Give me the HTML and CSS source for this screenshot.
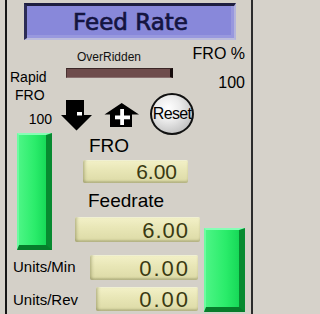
FILE: index.html
```html
<!DOCTYPE html>
<html>
<head>
<meta charset="utf-8">
<link rel="stylesheet" href="styles.css">
</head>
<body>
<div class="panel">
  <div class="title">Feed Rate</div>
  <div class="main">
    <div class="leftmain">
      <div class="upper">
        <div class="leftcol">
          <div class="lbl rapid">Rapid</div>
          <div class="lbl rapid-fro">FRO</div>
          <div class="lbl rapid-val">100</div>
          <div class="gbar gbar-left"></div>
        </div>
        <div class="midcol">
          <div class="overridden">OverRidden</div>
          <div class="ovbar"></div>
          <div class="icons">
            <svg class="ico-down" width="31" height="31" viewBox="0 0 31 31">
              <path d="M5 0 H23 V15 H31 L15.5 30.5 L0 15 H5 Z" fill="#000"/>
              <rect x="16" y="12" width="5" height="3.5" fill="#fff"/>
            </svg>
            <svg class="ico-up" width="36" height="26" viewBox="0 0 36 26">
              <path d="M17.7 1 L35 12.5 H28 V25 H6 V12.5 H0.5 Z" fill="#000"/>
              <rect x="16.2" y="7" width="3.8" height="16" fill="#fff"/>
              <rect x="11" y="13.5" width="15" height="3.8" fill="#fff"/>
            </svg>
            <div class="reset">Reset</div>
          </div>
          <div class="lbl big fro">FRO</div>
          <div class="field f1">6.00</div>
          <div class="lbl big feedrate">Feedrate</div>
          <div class="field f2">6.00</div>
        </div>
      </div>
      <div class="row row-min">
        <div class="lbl units">Units/Min</div>
        <div class="field f3">0.00</div>
      </div>
      <div class="row row-rev">
        <div class="lbl units units-rev">Units/Rev</div>
        <div class="field f4">0.00</div>
      </div>
    </div>
    <div class="rightcol">
      <div class="lbl fropct">FRO %</div>
      <div class="lbl fropct-val">100</div>
      <div class="gbar gbar-right"></div>
    </div>
  </div>
</div>
</body>
</html>
```
FILE: styles.css
```css
html, body {
  margin: 0;
  padding: 0;
  background: #d6d2ca;
  font-family: "Liberation Sans", Arial, sans-serif;
}
.panel {
  margin-left: 5px;
  width: 248px;
  height: 314px;
  box-sizing: border-box;
  border-left: 2px solid #161616;
  border-right: 2px solid #2c2c2c;
  background: #d4d0c8;
  overflow: hidden;
}
.title {
  margin: 3px 0 0 17px;
  width: 212px;
  height: 37px;
  box-sizing: border-box;
  background: #8888da;
  border-top: 3px solid #1e1e40;
  border-left: 3px solid #2c2c56;
  border-right: 2px solid #b4b4dc;
  border-bottom: 2px solid #bcbcdc;
  box-shadow: inset -3px -3px 0 #9898de;
  font-family: "DejaVu Sans", sans-serif;
  font-size: 23px;
  line-height: 32px;
  text-align: center;
  color: #141440;
  -webkit-text-stroke: 0.7px #141440;
}
.main {
  display: flex;
  height: 274px;
}
.leftmain {
  width: 193px;
  display: flex;
  flex-direction: column;
}
.upper {
  display: flex;
  height: 210px;
}
.leftcol {
  width: 51px;
  box-sizing: border-box;
  padding-left: 3px;
  padding-right: 6px;
  display: flex;
  flex-direction: column;
}
.lbl {
  color: #000;
  white-space: nowrap;
}
.rapid {
  font-size: 14px;
  line-height: 16px;
  margin-top: 29px;
}
.rapid-fro {
  font-size: 14px;
  line-height: 16px;
  margin-top: 2px;
  margin-left: 5px;
}
.rapid-val {
  font-size: 14px;
  line-height: 16px;
  margin-top: 8px;
  text-align: right;
}
.gbar {
  box-sizing: border-box;
  background: linear-gradient(to right, #4cf585 0%, #2aec6a 60%, #17d958 100%);
  border-top: 2px solid #86ffb6;
  border-left: 2px solid #6cfca0;
  border-right: 6px solid #078a30;
  border-bottom: 5px solid #067d2b;
}
.gbar-left {
  margin-top: 6px;
  margin-left: 7px;
  width: 35px;
  height: 117px;
}
.midcol {
  width: 142px;
  display: flex;
  flex-direction: column;
}
.overridden {
  font-size: 12px;
  line-height: 14px;
  margin-top: 10px;
  margin-left: 19px;
  color: #111;
}
.ovbar {
  margin-top: 4px;
  margin-left: 8px;
  width: 107px;
  height: 10px;
  box-sizing: border-box;
  background: #6e4c4c;
  border-top: 1px solid #3a2626;
  border-left: 1px solid #4a3232;
  border-bottom: 1px solid #8a7070;
  border-right: 3px solid #160c0c;
}
.icons {
  margin-top: 15px;
  height: 42px;
  display: flex;
  align-items: flex-start;
}
.ico-down {
  margin-top: 7px;
  margin-left: 3px;
}
.ico-up {
  margin-top: 9px;
  margin-left: 12px;
}
.reset {
  margin-left: 10px;
  width: 44px;
  height: 42px;
  box-sizing: border-box;
  border: 2px solid #111;
  border-radius: 50%;
  background: radial-gradient(circle at 40% 35%, #ffffff 0%, #ececec 35%, #c4c4c4 75%, #9a9a9a 100%);
  font-size: 16px;
  line-height: 38px;
  letter-spacing: -0.7px;
  text-align: center;
  color: #000;
  white-space: nowrap;
}
.big {
  font-size: 19px;
  line-height: 22px;
}
.fro {
  margin-left: 31px;
}
.feedrate {
  margin-top: 7px;
  margin-left: 30px;
}
.field {
  box-sizing: border-box;
  background: linear-gradient(to bottom, #f3f1c8 0%, #e8e6b6 45%, #dcdaa6 100%);
  border-radius: 2px;
  box-shadow: inset 3px 0 3px -1px rgba(140, 140, 90, 0.45), inset 0 -2px 2px rgba(120, 120, 80, 0.35), inset 0 1px 0 #f8f8dc;
  color: #3a3a12;
  text-align: right;
  white-space: nowrap;
}
.f1 {
  margin-top: 3px;
  margin-left: 25px;
  width: 105px;
  height: 23px;
  font-size: 21px;
  line-height: 24px;
  padding-right: 11px;
}
.f2 {
  margin-top: 5px;
  margin-left: 17px;
  width: 125px;
  height: 25px;
  font-size: 22px;
  line-height: 27px;
  letter-spacing: 1px;
  padding-right: 11px;
}
.row {
  display: flex;
  align-items: flex-start;
}
.row-min {
  margin-top: 3px;
  height: 27px;
}
.units {
  font-size: 15px;
  line-height: 17px;
  margin-left: 6px;
  width: 77px;
  margin-top: 5px;
}
.units-rev {
  width: 83px;
  margin-top: 11px;
}
.f3 {
  margin-top: 2px;
  width: 108px;
  height: 25px;
  font-size: 22px;
  line-height: 27px;
  letter-spacing: 2px;
  padding-right: 8px;
}
.f4 {
  margin-top: 7px;
  width: 102px;
  height: 24px;
  font-size: 22px;
  line-height: 25px;
  letter-spacing: 2px;
  padding-right: 8px;
}
.rightcol {
  width: 51px;
  box-sizing: border-box;
  padding-top: 5px;
  padding-right: 6px;
  display: flex;
  flex-direction: column;
  align-items: flex-end;
}
.fropct {
  font-size: 16px;
  line-height: 18px;
}
.fropct-val {
  font-size: 16px;
  line-height: 18px;
  margin-top: 11px;
}
.gbar-right {
  margin-top: auto;
  margin-bottom: 2px;
  width: 41px;
  height: 84px;
}
```
